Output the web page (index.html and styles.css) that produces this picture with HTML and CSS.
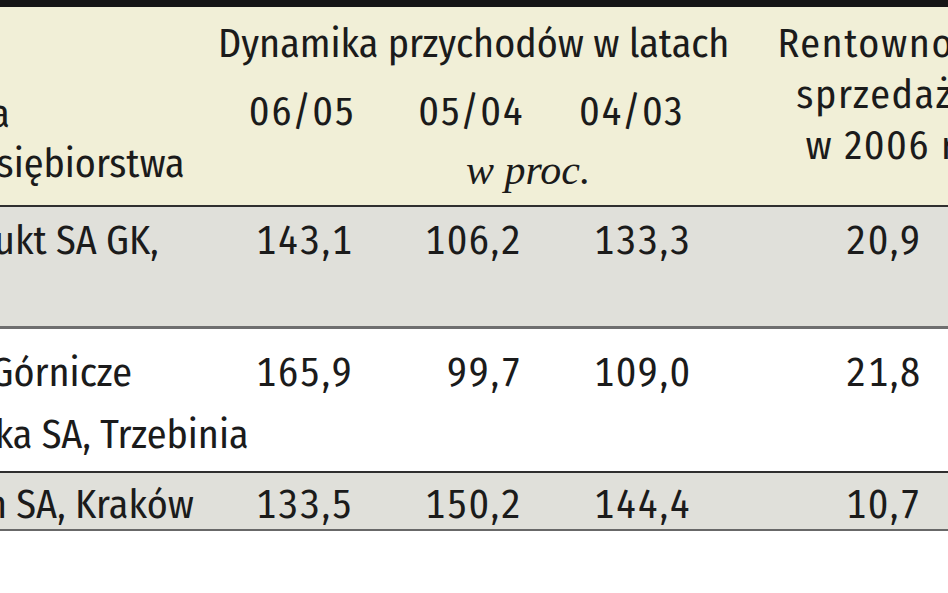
FILE: index.html
```html
<!DOCTYPE html>
<html lang="pl">
  <head>
    <meta charset="UTF-8" />
    <meta name="viewport" content="width=device-width, initial-scale=1.0" />
    <title>Dynamika przychodów</title>
    <link rel="stylesheet" href="styles.css">
  </head>

  <body>
    <div class="table">
      <!-- naglowek tabeli -->
      <div class="head">
        <div class="head-name">Nazwa<br />przedsiębiorstwa</div>
        <div class="dyn">
          <div class="dyn-title">Dynamika przychodów w latach</div>
          <div class="years">
            <span class="year">06/05</span>
            <span class="year">05/04</span>
            <span class="year year-last">04/03</span>
          </div>
          <div class="unit">w proc.</div>
        </div>
        <div class="rent">Rentowność<br />sprzedaży<br />w 2006 r.</div>
      </div>

      <!-- wiersze -->
      <div class="row row-1 shaded">
        <div class="name">Stalprodukt SA GK,</div>
        <div class="num">143,1</div>
        <div class="num">106,2</div>
        <div class="num">133,3</div>
        <div class="num num-rent">20,9</div>
      </div>

      <div class="row row-2">
        <div class="name">Zakłady Górnicze<br />Trzebionka SA, Trzebinia</div>
        <div class="num">165,9</div>
        <div class="num">99,7</div>
        <div class="num">109,0</div>
        <div class="num num-rent">21,8</div>
      </div>

      <div class="row row-3 shaded">
        <div class="name">Comarch SA, Kraków</div>
        <div class="num">133,5</div>
        <div class="num">150,2</div>
        <div class="num">144,4</div>
        <div class="num num-rent">10,7</div>
      </div>
    </div>
  </body>
</html>
```

FILE: styles.css
```css
* {
  margin: 0;
  padding: 0;
  box-sizing: border-box;
}

html,
body {
  overflow: hidden;
  background: #fff;
}

/* tabela jest wycieta z wiekszej strony, dlatego wychodzi poza okno */
.table {
  width: 1225px;
  margin-left: -145px;
  font-family: "Fira Sans Condensed", "Roboto Condensed", "Open Sans", sans-serif;
  font-size: 40px;
  color: #1b1b1b;
}

.head,
.row {
  display: grid;
  grid-template-columns: 328px 169px 169px 169px 390px;
  align-items: start;
}

/* naglowek */
.head {
  background-color: #f1efd7;
  border-top: 7px solid #161616;
  border-bottom: 2px solid #2f2f2f;
  padding: 12px 0 10px;
  line-height: 50px;
}

.head-name {
  padding: 70px 0 0 50px;
  white-space: nowrap;
}

.dyn {
  grid-column: 2 / span 3;
}

.dyn-title {
  padding-left: 35px;
  white-space: nowrap;
}

.years {
  display: grid;
  grid-template-columns: repeat(3, 169px);
  margin-top: 18px;
}

.year {
  text-align: right;
  letter-spacing: 1.75px;
  margin-right: -3px;
}

.year-last {
  padding-right: 9px;
}

.unit {
  margin-top: 8px;
  padding-left: 283px;
  font-family: "Liberation Serif", serif;
  font-style: italic;
  font-size: 42px;
}

.rent {
  text-align: center;
  line-height: 51px;
  letter-spacing: 1.6px;
  margin-left: -1px;
}

/* wiersze danych */
.shaded {
  background-color: #e0e0da;
}

.name {
  white-space: nowrap;
}

.row-3 .name {
  padding-left: 10px;
}

.num {
  text-align: right;
  font-variant-numeric: tabular-nums;
  letter-spacing: 1.75px;
  margin-right: -1.75px;
}

.num-rent {
  text-align: center;
  margin-right: 2px;
}

.row-1 {
  line-height: 50px;
  padding: 9px 0 60px;
  border-bottom: 3px solid #6f6f6f;
}

.row-2 {
  line-height: 62px;
  padding: 13px 0 5px;
}

.row-3 {
  line-height: 44px;
  padding: 10px 0 2px;
  border-top: 2px solid #2f2f2f;
  border-bottom: 2px solid #686868;
}
```
